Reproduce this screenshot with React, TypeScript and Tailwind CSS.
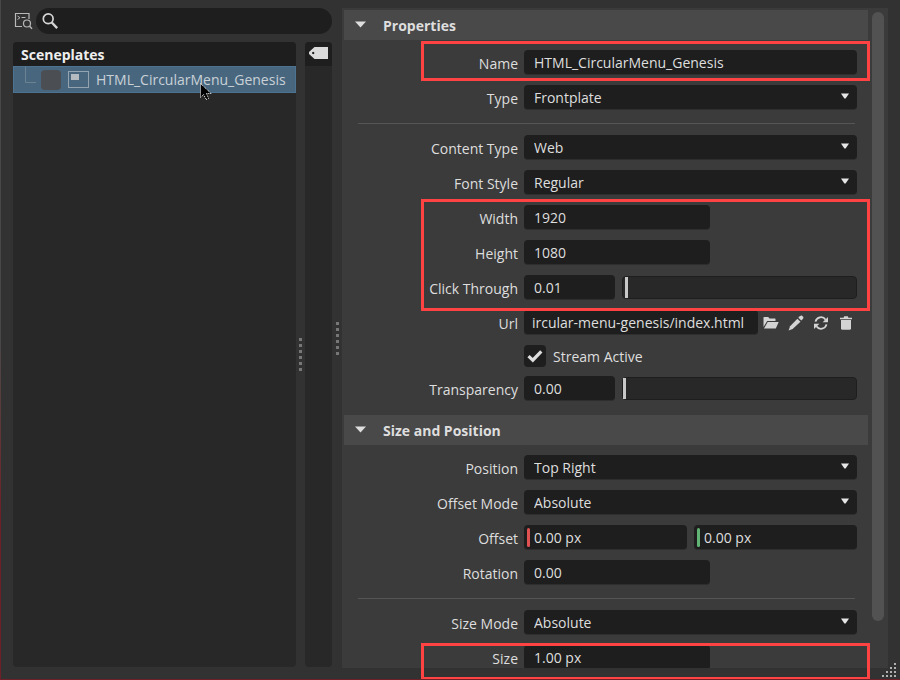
import React from "react";

const fieldBase =
  "h-[25px] w-full min-w-0 rounded-[4px] border-b border-[#2e2e2e] bg-[#1e1e1e] text-[14px] text-[#dedede] outline-none";

function Grip() {
  return (
    <div className="flex flex-col gap-[3px]" aria-hidden="true">
      {[0, 1, 2, 3, 4, 5].map((i) => (
        <span key={i} className="size-[3px] bg-[#777777]" />
      ))}
    </div>
  );
}

function Row({ label, id, children }: { label: string; id: string; children: React.ReactNode }) {
  return (
    <div className="flex h-[25px] gap-[6px] pr-[11px]">
      <label htmlFor={id} className="w-[174px] shrink-0 text-right leading-7">
        {label}
      </label>
      <div className="flex min-w-0 flex-1 gap-[7px]">{children}</div>
    </div>
  );
}

function TextField({ id, value }: { id: string; value: string }) {
  return <input id={id} type="text" defaultValue={value} className={`${fieldBase} px-[10px]`} />;
}

function SelectRow({ label, id, value }: { label: string; id: string; value: string }) {
  return (
    <Row label={label} id={id}>
      <div className="relative flex-1">
        <select id={id} defaultValue={value} className={`${fieldBase} block appearance-none px-[10px]`}>
          <option>{value}</option>
        </select>
        <svg className="pointer-events-none absolute top-2 right-2 h-[6px] w-2" viewBox="0 0 8 6">
          <path d="M0 0.500h8L4.600 5.500h-1.200z" fill="#e6e6e6" />
        </svg>
      </div>
    </Row>
  );
}

function HalfRow({ label, id, value }: { label: string; id: string; value: string }) {
  return (
    <Row label={label} id={id}>
      <div className="w-[56%]">
        <TextField id={id} value={value} />
      </div>
    </Row>
  );
}

function SliderRow({ label, id, value }: { label: string; id: string; value: string }) {
  return (
    <Row label={label} id={id}>
      <div className="w-[91px] shrink-0">
        <TextField id={id} value={value} />
      </div>
      <input
        type="range"
        aria-label={`${label} slider`}
        min="0"
        max="1"
        step="0.01"
        defaultValue={value}
        className="mt-px h-[23px] min-w-0 flex-1 appearance-none rounded-[4px] border border-[#1e1e1e] bg-[#282828] [&::-webkit-slider-thumb]:h-[21px] [&::-webkit-slider-thumb]:w-[3px] [&::-webkit-slider-thumb]:appearance-none [&::-webkit-slider-thumb]:bg-[#c8c8c8]"
      />
    </Row>
  );
}

function Divider() {
  return <hr className="mt-[3px] mr-[13px] mb-px ml-[14px] border-[#555555]" />;
}

function Section({ title, children }: { title: string; children: React.ReactNode }) {
  return (
    <section>
      <h2>
        <button type="button" className="flex h-[30px] w-full items-center gap-4 bg-[#494949] pl-[11px] text-left font-bold">
          <svg className="-mt-0.5 h-[7px] w-3" viewBox="0 0 12 7">
            <path d="M0 0.500h11L5.500 6.500z" fill="#dedede" />
          </svg>
          {title}
        </button>
      </h2>
      <div className="flex flex-col gap-[10px] pt-[10px] pb-[14px]">{children}</div>
    </section>
  );
}

function OffsetField({ id, label, bar }: { id: string; label: string; bar: string }) {
  return (
    <div className="relative min-w-0 flex-1">
      <input id={id} aria-label={label} type="text" defaultValue="0.00 px" className={`${fieldBase} block px-[10px]`} />
      <span className={`absolute inset-y-[3px] left-[3px] w-[3px] rounded-full ${bar}`} />
    </div>
  );
}

function UrlIcons() {
  return (
    <div className="-ml-0.5 flex h-6 shrink-0 items-center gap-[9px] pt-px pr-[3px] text-[#d4d4d4]">
      <button type="button" aria-label="Open file">
        <svg className="size-4" viewBox="0 0 16 16" fill="currentColor">
          <path d="M0.500 2.500q0-.5.5-.5h4.200l1.300 1.500H12q.5 0 .5.500V6H4.200L.5 12z" />
          <path d="M4.700 6.900h11L12.800 13.500H1z" />
        </svg>
      </button>
      <button type="button" aria-label="Edit">
        <svg className="size-4" viewBox="0 0 16 16" fill="currentColor">
          <path d="M9.400 3.700l3.100 3.100L4.600 14 .6 15.500l1.500-4.200z" />
          <path d="M10.300 2.800l1.500-1.500q1-.9 2-.8l1.500 1.500q.4 1.100-.5 2.100l-1.500 1.500z" />
        </svg>
      </button>
      <button type="button" aria-label="Reload">
        <svg className="size-4" viewBox="0 0 16 16" fill="currentColor">
          <path d="M2.500 6.600A5.600 5.600 0 0 1 12.600 4.700M13.500 9.400A5.600 5.600 0 0 1 3.400 11.300" fill="none" stroke="currentColor" strokeWidth="1.800" />
          <path d="M15 2v5.300H9.600zM1 14V8.700h5.400z" />
        </svg>
      </button>
      <button type="button" aria-label="Delete">
        <svg className="size-4" viewBox="0 0 16 16" fill="currentColor">
          <path d="M2 2.700h3.600L6.200 1.200h3.600l.6 1.500H14v1.500H2z" />
          <path d="M3 5h10v8.200q0 1.500-1.500 1.500h-7Q3 14.700 3 13.200z" />
        </svg>
      </button>
    </div>
  );
}

function Sceneplates() {
  return (
    <div className="flex w-[319px] shrink-0 flex-col gap-2 pb-3">
      <div className="flex h-[26px] shrink-0 items-center gap-[3px]">
        <button type="button" aria-label="Script search" className="shrink-0">
          <svg className="h-[18px] w-5" viewBox="0 0 20 18" fill="none" stroke="#b9b9b9">
            <path d="M16 7V1.500H2.500v13H9" strokeWidth="1.200" />
            <path d="M4.500 4l2.500 1.700L4.500 7.500M8.500 5.500h4" />
            <circle cx="14" cy="11.500" r="3.500" strokeWidth="1.200" />
            <path d="M16.600 14.200l2.400 2.600" strokeWidth="1.500" />
          </svg>
        </button>
        <div className="relative flex-1">
          <svg className="absolute top-[5px] left-1.5 size-4" viewBox="0 0 16 16" fill="none" stroke="#d6d6d6">
            <circle cx="6.200" cy="5.800" r="4.900" strokeWidth="1.700" />
            <path d="M9.800 9.500l5.400 5.600" strokeWidth="2.400" />
          </svg>
          <input type="search" aria-label="Search" className="block h-[26px] w-full rounded-full bg-[#1e1e1e] pr-3 pl-7 text-[14px] outline-none" />
        </div>
      </div>
      <div className="flex min-h-0 flex-1">
        <div className="flex-1 overflow-hidden rounded-[4px] bg-[#282828]">
          <h2 className="h-6 bg-[#1e1e1e] pl-2 leading-[25px] font-bold text-[#eeeeee]">Sceneplates</h2>
          <div className="relative flex h-[27px] items-center border border-[#4d7392] bg-[#48677f] pl-[11px]">
            <svg className="h-[27px] w-[13px]" viewBox="0 0 13 27" fill="none" stroke="#6b8292">
              <path d="M0.500 1v15.500H11" />
            </svg>
            <input
              type="checkbox"
              aria-label="Enable HTML_CircularMenu_Genesis"
              className="ml-[3px] size-5 appearance-none rounded-[4px] bg-[#4b4f53]"
            />
            <svg className="ml-[7px] h-[17px] w-[21px]" viewBox="0 0 21 17" fill="none">
              <rect x="0.500" y="0.500" width="20" height="16" stroke="#93a3af" />
              <rect x="3" y="3" width="8" height="6" fill="#b4bcc2" />
            </svg>
            <span className="ml-[7px] text-[#c9d1d7]">HTML_CircularMenu_Genesis</span>
            <svg className="absolute top-4 left-[186px] h-[18px] w-3" viewBox="0 0 12 18">
              <path d="M0.500 0.500v14l3.200-3 2.300 5 2.600-1.100-2.200-4.900h4.800z" fill="#000000" stroke="#ffffff" strokeDasharray="1 1" />
            </svg>
          </div>
        </div>
        <div className="flex w-[9px] items-center justify-center">
          <Grip />
        </div>
        <div className="w-[27px] overflow-hidden rounded-[4px] bg-[#282828]">
          <button type="button" aria-label="Tags" className="flex h-6 w-full items-start justify-center bg-[#1e1e1e] pt-[5px]">
            <svg className="h-3 w-[19px]" viewBox="0 0 19 12">
              <path fillRule="evenodd" d="M5.500 0H19v12H5.500L0 7V5zM4.200 4.800a1.200 1.200 0 1 0 .01 0z" fill="#dadada" />
            </svg>
          </button>
        </div>
      </div>
    </div>
  );
}

const highlight = "pointer-events-none absolute border-[3px] border-[#ff4242]";

export default function App() {
  return (
    <div className="h-screen bg-linear-to-b from-[#484848] from-50% to-[#6e2029] to-75% pb-px pl-px font-['Open_Sans','Noto_Sans',sans-serif] text-[14px] text-[#dedede]">
      <main className="relative flex h-full overflow-hidden bg-[#323232] pt-2 pr-3 pl-3">
        <Sceneplates />
        <div className="flex w-[10px] shrink-0 items-center justify-center pb-[11px]">
          <Grip />
        </div>
        <div className="relative mb-[11px] flex min-w-0 flex-1 bg-[#3b3b3b]">
          <div className="flex min-w-0 flex-1 gap-1 overflow-hidden pt-0.5 pr-1 pl-0.5">
            <div className="min-w-0 flex-1">
              <Section title="Properties">
                <div className="relative">
                  <Row label="Name" id="name">
                    <TextField id="name" value="HTML_CircularMenu_Genesis" />
                  </Row>
                  <div className={`${highlight} -top-[9px] -right-0.5 -bottom-1.5 left-[77px]`} />
                </div>
                <SelectRow label="Type" id="type" value="Frontplate" />
                <Divider />
                <SelectRow label="Content Type" id="content-type" value="Web" />
                <SelectRow label="Font Style" id="font-style" value="Regular" />
                <div className="relative z-10 flex flex-col gap-[10px]">
                  <HalfRow label="Width" id="width" value="1920" />
                  <HalfRow label="Height" id="height" value="1080" />
                  <SliderRow label="Click Through" id="click-through" value="0.01" />
                  <div className={`${highlight} -top-1.5 -right-0.5 -bottom-[11px] left-[77px]`} />
                </div>
                <Row label="Url" id="url">
                  <input id="url" type="text" defaultValue="ircular-menu-genesis/index.html" className={`${fieldBase} flex-1 px-2`} />
                  <UrlIcons />
                </Row>
                <div className="flex h-[21px] items-start gap-[7px] pl-[180px]">
                  <span className="relative size-[22px] shrink-0">
                    <input
                      id="stream-active"
                      type="checkbox"
                      defaultChecked
                      className="peer block size-[22px] appearance-none rounded-[4px] bg-[#1e1e1e]"
                    />
                    <svg className="pointer-events-none absolute inset-0 hidden peer-checked:block" viewBox="0 0 22 22" fill="none" stroke="#dedede">
                      <path d="M4.500 11.200l4.300 4L17.300 6.300" strokeWidth="3.200" />
                    </svg>
                  </span>
                  <label htmlFor="stream-active" className="leading-6">
                    Stream Active
                  </label>
                </div>
                <SliderRow label="Transparency" id="transparency" value="0.00" />
              </Section>
              <Section title="Size and Position">
                <SelectRow label="Position" id="position" value="Top Right" />
                <SelectRow label="Offset Mode" id="offset-mode" value="Absolute" />
                <Row label="Offset" id="offset-x">
                  <OffsetField id="offset-x" label="Offset X" bar="bg-[#e05252]" />
                  <OffsetField id="offset-y" label="Offset Y" bar="bg-[#62b475]" />
                </Row>
                <HalfRow label="Rotation" id="rotation" value="0.00" />
                <Divider />
                <SelectRow label="Size Mode" id="size-mode" value="Absolute" />
                <HalfRow label="Size" id="size" value="1.00 px" />
              </Section>
            </div>
            <div className="mt-0.5 mb-[47px] w-3 shrink-0 rounded-full bg-[#525252]" />
          </div>
          <div className={`${highlight} right-[18px] -bottom-3 left-[79px] h-[37px]`} />
        </div>
        <svg className="absolute right-1 bottom-0.5 size-[14px]" viewBox="0 0 14 14" fill="#b0b0b0">
          <path d="M12 0h2v2h-2zM12 4h2v2h-2zM8 4h2v2H8zM12 8h2v2h-2zM8 8h2v2H8zM4 8h2v2H4zM12 12h2v2h-2zM8 12h2v2H8zM4 12h2v2H4zM0 12h2v2H0z" />
        </svg>
      </main>
    </div>
  );
}
